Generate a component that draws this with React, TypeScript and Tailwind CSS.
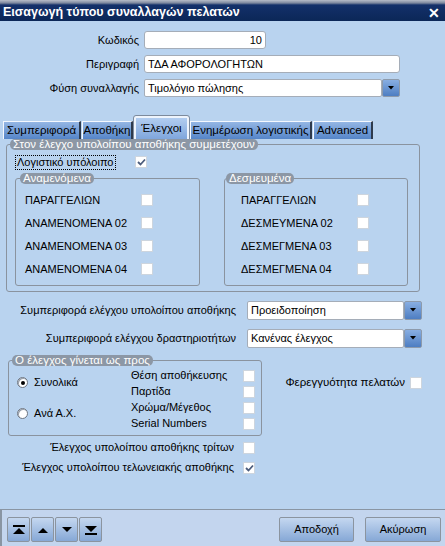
import type { ReactNode } from 'react';

const Check = ({ checked = false }: { checked?: boolean }) => (
  <div className="w-[12px] h-[12px] shrink-0 bg-white border border-[#cdd5de] flex items-center justify-center">
    {checked && (
      <svg width="9" height="8" viewBox="0 0 9 8">
        <path d="M1 4 L3.5 6.5 L8 1.5" fill="none" stroke="#4b5c7c" strokeWidth="1.8" />
      </svg>
    )}
  </div>
);

const Radio = ({ checked = false }: { checked?: boolean }) => (
  <div className="w-[11px] h-[11px] shrink-0 rounded-full bg-white border border-[#6e7682] shadow-[inset_1px_1px_0_#9aa2ae] flex items-center justify-center">
    {checked && <div className="w-[4px] h-[4px] rounded-full bg-black" />}
  </div>
);

const DropButton = () => (
  <div className="w-[18px] h-full shrink-0 rounded-[2px] border border-[#8d9aab] bg-[linear-gradient(to_bottom,#88aee2,#4e7ec2)] flex items-center justify-center">
    <svg width="6" height="4" viewBox="0 0 6 4">
      <path d="M0 0 H6 L3 3.5 Z" fill="#000" />
    </svg>
  </div>
);

const Combo = ({ value, width }: { value: string; width: string }) => (
  <div className={`flex h-full ${width}`}>
    <div className="flex-1 bg-white border border-[#a5adb8] rounded-[2px] px-[3px] flex items-center">{value}</div>
    <DropButton />
  </div>
);

const Group = ({
  title,
  className,
  legendClass = 'ml-[4px]',
  children,
}: {
  title: string;
  className: string;
  legendClass?: string;
  children: ReactNode;
}) => (
  <fieldset className={`border border-[#8a939f] rounded-[3px] ${className}`}>
    <legend className={`${legendClass} px-[3px] rounded-[5px] bg-[#8c97a5] text-white text-[11.5px] leading-[11px] h-[11px]`}>
      {title}
    </legend>
    {children}
  </fieldset>
);

const Tab = ({ label, width, active = false }: { label: string; width: string; active?: boolean }) =>
  active ? (
    <div
      className={`${width} h-[23px] flex items-center justify-center rounded-t-[2px] border-2 border-b-0 border-[#eef4fc] outline outline-1 outline-[#7d8a9c] bg-[linear-gradient(to_bottom,#b2cdf0,#7fa6dc)]`}
    >
      {label}
    </div>
  ) : (
    <div
      className={`${width} h-[18px] flex items-center justify-center border-t border-l border-[#f4f8fe] border-r-2 border-r-[#2e3a4c] bg-[linear-gradient(to_bottom,#94b6e4,#5585c8)]`}
    >
      {label}
    </div>
  );

const NavIcon = ({ kind }: { kind: 'first' | 'up' | 'down' | 'last' }) => (
  <svg width="12" height="10" viewBox="0 0 12 10">
    {kind === 'first' && (
      <>
        <rect x="0" y="0" width="12" height="2" fill="#000" />
        <path d="M0 9 L6 3 L12 9 Z" fill="#000" />
      </>
    )}
    {kind === 'up' && <path d="M1 8 L6 3 L11 8 Z" fill="#000" />}
    {kind === 'down' && <path d="M1 2 L6 7 L11 2 Z" fill="#000" />}
    {kind === 'last' && (
      <>
        <path d="M0 1 L6 7 L12 1 Z" fill="#000" />
        <rect x="0" y="8" width="12" height="2" fill="#000" />
      </>
    )}
  </svg>
);

const btnClass =
  'h-[25px] border border-[#8b949f] rounded-[2px] bg-[linear-gradient(to_bottom,#c4d7f0,#86a8d6)] flex items-center justify-center';

const App = () => {
  return (
    <div className="w-[445px] h-[546px] bg-[#b9d3ef] flex flex-col font-['Liberation_Sans',Arial,sans-serif] text-[11px] text-black whitespace-nowrap overflow-hidden">
      {/* title bar */}
      <div className="h-[21px] shrink-0 flex items-center justify-between pl-[3px] pr-[5px] pt-[4px] bg-[linear-gradient(to_bottom,#b7bdc9_0px,#7d889e_3px,#13306a_5px,#0b2757_100%)]">
        <span className="text-white font-bold text-[12.5px] leading-none">Εισαγωγή τύπου συναλλαγών πελατών</span>
        <span className="text-white font-bold text-[14px] leading-none">✕</span>
      </div>

      {/* header fields */}
      <div className="flex flex-col gap-[6px] pt-[10px]">
        <div className="flex items-center h-[18px]">
          <span className="w-[139px] text-right">Κωδικός</span>
          <div className="ml-[5px] w-[122px] h-full bg-white border border-[#a5adb8] rounded-[3px] px-[3px] flex items-center justify-end">10</div>
        </div>
        <div className="flex items-center h-[18px]">
          <span className="w-[139px] text-right">Περιγραφή</span>
          <div className="ml-[5px] w-[256px] h-full bg-white border border-[#a5adb8] rounded-[3px] px-[3px] flex items-center">ΤΔΑ ΑΦΟΡΟΛΟΓΗΤΩΝ</div>
        </div>
        <div className="flex items-center h-[18px]">
          <span className="w-[139px] text-right">Φύση συναλλαγής</span>
          <div className="ml-[5px] h-full">
            <Combo value="Τιμολόγιο πώλησης" width="w-[256px]" />
          </div>
        </div>
      </div>

      {/* tabs */}
      <div className="flex items-end gap-[1px] mt-[19px] pl-[3px] h-[23px] text-[11.5px]">
        <Tab label="Συμπεριφορά" width="w-[78px]" />
        <Tab label="Αποθήκη" width="w-[51px]" />
        <Tab label="Έλεγχοι" width="w-[55px]" active />
        <Tab label="Ενημέρωση λογιστικής" width="w-[122px]" />
        <Tab label="Advanced" width="w-[60px]" />
      </div>

      {/* stock check group */}
      <Group title="Στον έλεγχο υπολοίπου αποθήκης συμμετέχουν" className="ml-[6px] w-[414px] pb-[5px]" legendClass="ml-[3px]">
        <div className="flex items-center mt-[4px] pl-[8px]">
          <div className="w-[120px]">
            <span className="inline-flex h-[15px] items-center border border-dotted border-black px-[1px]">Λογιστικό υπόλοιπο</span>
          </div>
          <Check checked />
        </div>
        <div className="flex gap-[24px] pl-[8px] mt-[2px]">
          <Group title="Αναμενόμενα" className="w-[185px] pb-[4px]" legendClass="ml-[4px]">
            <div className="flex flex-col pt-[5px] pl-[9px]">
              {['ΠΑΡΑΓΓΕΛΙΩΝ', 'ΑΝΑΜΕΝΟΜΕΝΑ 02', 'ΑΝΑΜΕΝΟΜΕΝΑ 03', 'ΑΝΑΜΕΝΟΜΕΝΑ 04'].map((t) => (
                <div key={t} className="h-[23px] flex items-center">
                  <span className="w-[116px]">{t}</span>
                  <Check />
                </div>
              ))}
            </div>
          </Group>
          <Group title="Δεσμευμένα" className="w-[184px] pb-[4px]" legendClass="ml-[1px]">
            <div className="flex flex-col pt-[5px] pl-[16px]">
              {['ΠΑΡΑΓΓΕΛΙΩΝ', 'ΔΕΣΜΕΥΜΕΝΑ 02', 'ΔΕΣΜΕΓΜΕΝΑ 03', 'ΔΕΣΜΕΓΜΕΝΑ 04'].map((t) => (
                <div key={t} className="h-[23px] flex items-center">
                  <span className="w-[116px]">{t}</span>
                  <Check />
                </div>
              ))}
            </div>
          </Group>
        </div>
      </Group>

      {/* behaviour combos */}
      <div className="flex flex-col gap-[9px] mt-[9px]">
        <div className="flex items-center h-[19px]">
          <span className="w-[236px] text-right">Συμπεριφορά ελέγχου υπολοίπου αποθήκης</span>
          <div className="ml-[11px] h-full">
            <Combo value="Προειδοποίηση" width="w-[175px]" />
          </div>
        </div>
        <div className="flex items-center h-[19px]">
          <span className="w-[236px] text-right">Συμπεριφορά ελέγχου δραστηριοτήτων</span>
          <div className="ml-[11px] h-full">
            <Combo value="Κανένας έλεγχος" width="w-[175px]" />
          </div>
        </div>
      </div>

      {/* check mode */}
      <div className="flex items-start mt-[7px] pr-[23px]">
        <Group title="Ο έλεγχος γίνεται ως προς" className="ml-[8px] w-[254px] shrink-0 pb-[3px]" legendClass="ml-[3px]">
          <div className="flex pt-[2px]">
            <div className="w-[122px] flex flex-col pl-[8px]">
              <div className="h-[16px] mt-[7px] flex items-center gap-[6px]">
                <Radio checked />
                <span>Συνολικά</span>
              </div>
              <div className="h-[16px] mt-[15px] flex items-center gap-[6px]">
                <Radio />
                <span>Ανά Α.Χ.</span>
              </div>
            </div>
            <div className="flex flex-col">
              {['Θέση αποθήκευσης', 'Παρτίδα', 'Χρώμα/Μέγεθος', 'Serial Numbers'].map((t) => (
                <div key={t} className="h-[16px] flex items-center">
                  <span className="w-[112px]">{t}</span>
                  <Check />
                </div>
              ))}
            </div>
          </div>
        </Group>
        <div className="flex-1 mt-[20px] h-[16px] flex items-center justify-end gap-[5px]">
          <span className="text-[11.5px]">Φερεγγυότητα πελατών</span>
          <Check />
        </div>
      </div>

      <div className="flex flex-col gap-[4px] mt-[4px]">
        <div className="h-[16px] flex items-center">
          <span className="w-[234px] text-right">Έλεγχος υπολοίπου αποθήκης τρίτων</span>
          <div className="ml-[9px]">
            <Check />
          </div>
        </div>
        <div className="h-[16px] flex items-center">
          <span className="w-[234px] text-right">Έλεγχος υπολοίπου τελωνειακής αποθήκης</span>
          <div className="ml-[9px]">
            <Check checked />
          </div>
        </div>
      </div>

      <div className="flex-1" />

      {/* footer */}
      <div className="h-[37px] shrink-0 border-t border-[#8995a3] border-l-2 border-l-[#8995a3] bg-[#c3d5ee] flex items-start pt-[7px] pl-[5px] pr-[4px]">
        <div className="flex gap-[1px]">
          {(['first', 'up', 'down', 'last'] as const).map((k) => (
            <div key={k} className={`${btnClass} w-[23px]`}>
              <NavIcon kind={k} />
            </div>
          ))}
        </div>
        <div className="flex-1" />
        <div className={`${btnClass} w-[75px]`}>Αποδοχή</div>
        <div className={`${btnClass} w-[76px] ml-[11px]`}>Ακύρωση</div>
      </div>
    </div>
  );
};

export default App;
